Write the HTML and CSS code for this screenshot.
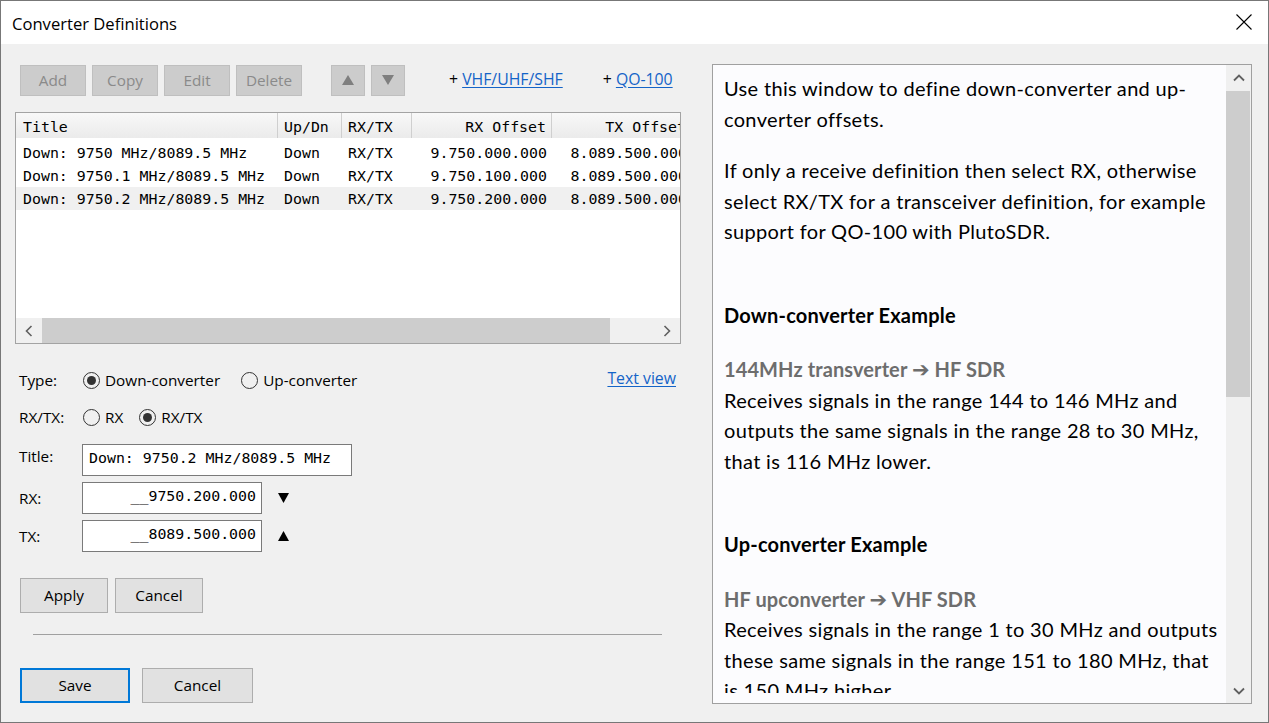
FILE: index.html
```html
<!DOCTYPE html>
<html>
<head>
<meta charset="utf-8">
<title>Converter Definitions</title>
<link rel="stylesheet" href="styles.css">
</head>
<body>
<div class="window">
  <div class="titlebar">
    <span class="title">Converter Definitions</span>
    <svg class="close" width="16" height="16" viewBox="0 0 16 16"><path d="M0.5 0.5 L15.5 15.5 M15.5 0.5 L0.5 15.5" stroke="#000" stroke-width="1.1" fill="none"/></svg>
  </div>
  <div class="main">
    <div class="left">
      <div class="toolbar">
        <span class="tbtn">Add</span>
        <span class="tbtn">Copy</span>
        <span class="tbtn">Edit</span>
        <span class="tbtn">Delete</span>
        <span class="tbtn arrow first-arrow"><svg width="12" height="10" viewBox="0 0 12 10"><polygon points="6,0 12,10 0,10" fill="#7f7f7f"/></svg></span>
        <span class="tbtn arrow"><svg width="12" height="10" viewBox="0 0 12 10"><polygon points="0,0 12,0 6,10" fill="#7f7f7f"/></svg></span>
        <span class="addlink first-link">+ <a class="link">VHF/UHF/SHF</a></span>
        <span class="addlink">+ <a class="link">QO-100</a></span>
      </div>
      <div class="table">
        <div class="tview">
          <div class="thead">
            <span class="c c1">Title</span>
            <span class="c c2">Up/Dn</span>
            <span class="c c3">RX/TX</span>
            <span class="c c4 r">RX Offset</span>
            <span class="c c5 r">TX Offset</span>
          </div>
          <div class="tbody">
            <div class="tr">
              <span class="c c1">Down: 9750 MHz/8089.5 MHz</span>
              <span class="c c2">Down</span>
              <span class="c c3">RX/TX</span>
              <span class="c c4 r">9.750.000.000</span>
              <span class="c c5 r">8.089.500.000</span>
            </div>
            <div class="tr">
              <span class="c c1">Down: 9750.1 MHz/8089.5 MHz</span>
              <span class="c c2">Down</span>
              <span class="c c3">RX/TX</span>
              <span class="c c4 r">9.750.100.000</span>
              <span class="c c5 r">8.089.500.000</span>
            </div>
            <div class="tr sel">
              <span class="c c1">Down: 9750.2 MHz/8089.5 MHz</span>
              <span class="c c2">Down</span>
              <span class="c c3">RX/TX</span>
              <span class="c c4 r">9.750.200.000</span>
              <span class="c c5 r">8.089.500.000</span>
            </div>
          </div>
        </div>
        <div class="hscroll">
          <span class="sbtn hbtn"><svg width="8" height="12" viewBox="0 0 8 12"><path d="M6.5 1 L1.5 6 L6.5 11" stroke="#606060" stroke-width="1.6" fill="none"/></svg></span>
          <span class="hthumb"></span>
          <span class="htrack"></span>
          <span class="sbtn hbtn"><svg width="8" height="12" viewBox="0 0 8 12"><path d="M1.5 1 L6.5 6 L1.5 11" stroke="#606060" stroke-width="1.6" fill="none"/></svg></span>
        </div>
      </div>

      <div class="frow row-type">
        <span class="lbl">Type:</span>
        <span class="radio on"></span><span class="rtext">Down-converter</span>
        <span class="radio gap-up"></span><span class="rtext">Up-converter</span>
        <a class="link textview">Text view</a>
      </div>
      <div class="frow row-rxtx">
        <span class="lbl">RX/TX:</span>
        <span class="radio"></span><span class="rtext">RX</span>
        <span class="radio gap-rxtx on"></span><span class="rtext">RX/TX</span>
      </div>
      <div class="frow row-field row-title">
        <span class="lbl">Title:</span>
        <span class="input wide">Down: 9750.2 MHz/8089.5 MHz</span>
      </div>
      <div class="frow row-field row-freq">
        <span class="lbl">RX:</span>
        <span class="input num">__9750.200.000</span>
        <svg class="tri" width="11" height="10" viewBox="0 0 11 10"><polygon points="0,0 11,0 5.5,10" fill="#000"/></svg>
      </div>
      <div class="frow row-field row-freq">
        <span class="lbl">TX:</span>
        <span class="input num">__8089.500.000</span>
        <svg class="tri" width="11" height="10" viewBox="0 0 11 10"><polygon points="5.5,0 11,10 0,10" fill="#000"/></svg>
      </div>
      <div class="brow apply-row">
        <span class="pbtn small">Apply</span>
        <span class="pbtn small">Cancel</span>
      </div>
      <div class="sep"></div>
      <div class="brow save-row">
        <span class="pbtn big default">Save</span>
        <span class="pbtn big cancel2">Cancel</span>
      </div>
    </div>

    <div class="help">
      <div class="help-view">
        <div class="help-clip">
          <p>Use this window to define down-converter and up-<br>converter offsets.</p>
          <p>If only a receive definition then select RX, otherwise<br>select RX/TX for a transceiver definition, for example<br>support for QO-100 with PlutoSDR.</p>
          <h3>Down-converter Example</h3>
          <p><span class="sub">144MHz transverter <span class="arr">➔</span> HF SDR</span><br>Receives signals in the range 144 to 146 MHz and<br>outputs the same signals in the range 28 to 30 MHz,<br>that is 116 MHz lower.</p>
          <h3>Up-converter Example</h3>
          <p><span class="sub">HF upconverter <span class="arr">➔</span> VHF SDR</span><br>Receives signals in the range 1 to 30 MHz and outputs<br>these same signals in the range 151 to 180 MHz, that<br>is 150 MHz higher.</p>
        </div>
      </div>
      <div class="vscroll">
        <span class="sbtn vup"><svg width="12" height="8" viewBox="0 0 12 8"><path d="M1 6.5 L6 1.5 L11 6.5" stroke="#606060" stroke-width="1.8" fill="none"/></svg></span>
        <span class="vthumb"></span>
        <span class="vtrack"></span>
        <span class="sbtn vdown"><svg width="12" height="8" viewBox="0 0 12 8"><path d="M1 1.5 L6 6.5 L11 1.5" stroke="#606060" stroke-width="1.8" fill="none"/></svg></span>
      </div>
    </div>
  </div>
</div>
</body>
</html>
```
FILE: styles.css
```css
* { box-sizing: border-box; }
body { margin: 0; background: #f0f0f0; }

.window {
  width: 1269px;
  height: 723px;
  border: 1px solid #777;
  display: flex;
  flex-direction: column;
  overflow: hidden;
  font-family: "Open Sans", sans-serif;
  font-size: 15.3px;
  color: #000;
}

.titlebar {
  flex: none;
  height: 43px;
  background: #fff;
  display: flex;
  align-items: center;
  padding: 0 16px 0 11px;
}
.title { flex: 1; font-size: 16.6px; padding-top: 1px; }
.close { display: block; margin-top: -1px; }

.main {
  flex: 1;
  display: flex;
  background: #f0f0f0;
  padding: 20px 16px 18px 14px;
  min-height: 0;
}

.left {
  flex: none;
  width: 667px;
  display: flex;
  flex-direction: column;
}

/* toolbar */
.toolbar {
  margin-top: 1px;
  margin-left: 5px;
  height: 31px;
  display: flex;
  align-items: center;
}
.tbtn {
  width: 66px;
  height: 31px;
  margin-right: 6px;
  background: #cccccc;
  border: 1px solid #bfbfbf;
  color: #8a8a8a;
  display: flex;
  align-items: center;
  justify-content: center;
  padding-bottom: 1px;
}
.tbtn.arrow { width: 34px; }
.tbtn.first-arrow { margin-left: 23px; }
.tbtn svg { display: block; }
.addlink { white-space: nowrap; margin-left: 40px; padding-bottom: 3px; font-size: 15.8px; }
.addlink.first-link { margin-left: 38px; }
.link { color: #1464c8; text-decoration: underline; text-underline-offset: 2px; }

/* table */
.table {
  margin-top: 16px;
  width: 666px;
  height: 232px;
  border: 1px solid #a3a3a3;
  background: #fff;
  display: flex;
  flex-direction: column;
}
.tview {
  flex: 1;
  overflow: hidden;
  display: flex;
  flex-direction: column;
  font-family: "DejaVu Sans Mono", monospace;
  font-size: 14.9px;
}
.thead {
  flex: none;
  height: 25px;
  display: flex;
  background: linear-gradient(#f8f8f8, #ebebeb);
}
.thead .c { border-right: 1px solid #cfcfcf; line-height: 25px; padding-top: 2px; }
.c {
  flex: none;
  white-space: nowrap;
  overflow: hidden;
  padding: 0 6px;
}
.c1 { width: 262px; padding-left: 7px; }
.c2 { width: 64px; }
.c3 { width: 70px; }
.c4 { width: 140px; }
.c5 { width: 140px; }
.c.r { text-align: right; padding-right: 5px; }
.tbody { flex: 1; padding-top: 3px; }
.tr { display: flex; height: 23px; align-items: center; }
.tr.sel { background: #f0f0f0; }

.hscroll {
  flex: none;
  height: 25px;
  display: flex;
  background: #f0f0f0;
}
.sbtn { display: flex; align-items: center; justify-content: center; }
.sbtn svg { display: block; }
.hbtn { width: 26px; }
.hthumb { width: 568px; background: #cdcdcd; }
.htrack { flex: 1; }

/* form */
.frow { display: flex; align-items: center; }
.lbl { width: 63px; margin-left: 4px; flex: none; }
.row-type { margin-top: 26px; height: 20px; }
.row-rxtx { margin-top: 17px; height: 20px; }
.radio {
  flex: none;
  width: 17px;
  height: 17px;
  border: 1px solid #333;
  border-radius: 50%;
  margin-left: 1px;
  display: flex;
  align-items: center;
  justify-content: center;
}
.radio.on::after {
  content: "";
  width: 9px;
  height: 9px;
  border-radius: 50%;
  background: #333;
}
.rtext { margin-left: 5px; padding-bottom: 1px; }
.radio.gap-up { margin-left: 21px; }
.radio.gap-rxtx { margin-left: 16px; }
.textview { margin-left: auto; margin-right: 6px; padding-bottom: 5px; font-size: 15.8px; }

.row-title { margin-top: 17px; }
.row-freq { margin-top: 6px; }
.row-field .lbl { padding-bottom: 8px; }
.row-freq .lbl { padding-bottom: 0; }
.input {
  flex: none;
  height: 32px;
  background: #fff;
  border: 1px solid #7a7a7a;
  font-family: "DejaVu Sans Mono", monospace;
  font-size: 14.9px;
  display: flex;
  align-items: center;
  padding: 0 6px 4px 6px;
  white-space: nowrap;
}
.input.wide { width: 270px; }
.input.num { width: 180px; justify-content: flex-end; padding-right: 5px; }
.tri { display: block; margin-left: 16px; }

.brow { display: flex; margin-left: 5px; }
.apply-row { margin-top: 26px; }
.pbtn {
  height: 35px;
  background: #e1e1e1;
  border: 1px solid #adadad;
  display: flex;
  align-items: center;
  justify-content: center;
  padding-bottom: 1px;
}
.pbtn.small { width: 88px; margin-right: 7px; }
.pbtn.big { width: 110px; }
.pbtn.default { border: 2px solid #0078d7; }
.pbtn.cancel2 { width: 111px; margin-left: 12px; }
.sep {
  margin-top: 21px;
  margin-left: 18px;
  width: 629px;
  height: 1px;
  background: #a0a0a0;
}
.save-row { margin-top: 33px; }

/* help panel */
.help {
  flex: 1;
  margin-left: 30px;
  border: 1px solid #a0a0a0;
  background: #fcfcfe;
  display: flex;
}
.help-view {
  flex: 1;
  padding-bottom: 10px;
  display: flex;
  flex-direction: column;
  min-width: 0;
}
.help-clip {
  flex: 1;
  overflow: hidden;
  padding: 8px 0 0 11px;
  font-family: Lato, sans-serif;
  font-size: 20px;
  letter-spacing: 0.33px;
  line-height: 30.5px;
  white-space: nowrap;
}
.help-clip p { margin: 0 0 21px; }
.help-clip h3 { margin: 53px 0 24px; font-size: 20px; font-weight: bold; line-height: 30.5px; letter-spacing: 0.2px; }
.sub { font-weight: bold; color: #6d6d6d; letter-spacing: 0.1px; }
.arr { font-family: "DejaVu Sans", sans-serif; font-size: 21px; line-height: 1; letter-spacing: 0; }

.vscroll {
  flex: none;
  width: 25px;
  background: #f0f0f0;
  display: flex;
  flex-direction: column;
}
.vup { height: 26px; }
.vthumb { height: 306px; width: 24px; background: #cdcdcd; }
.vtrack { flex: 1; }
.vdown { height: 24px; }
```
